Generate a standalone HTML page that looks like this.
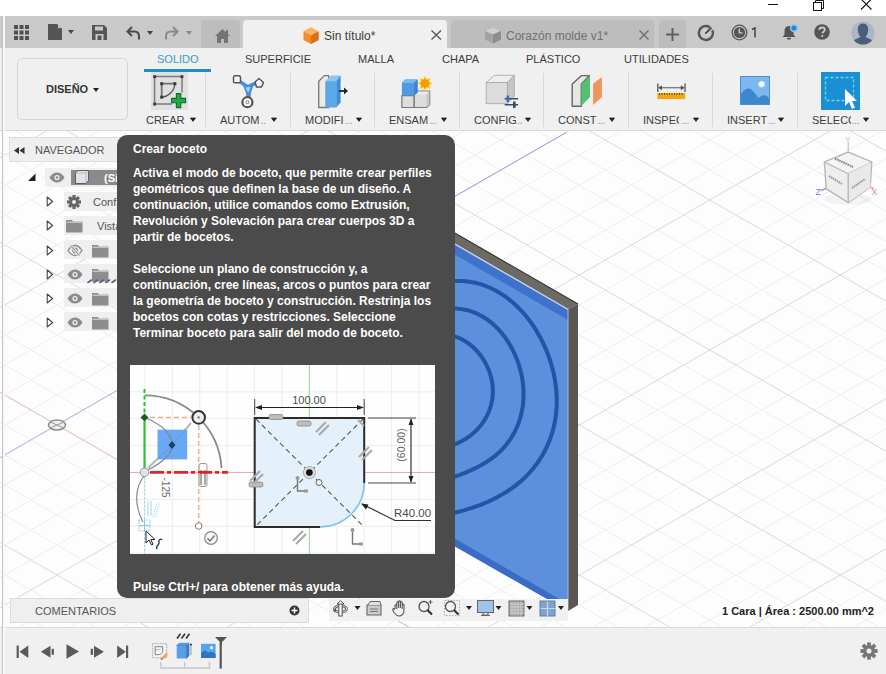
<!DOCTYPE html>
<html><head><meta charset="utf-8">
<style>
*{margin:0;padding:0;box-sizing:border-box}
html,body{width:886px;height:674px;overflow:hidden;background:#fff;font-family:"Liberation Sans",sans-serif}
.a{position:absolute}
#title{left:0;top:0;width:886px;height:16px;background:#fff}
#tb{left:0;top:16px;width:886px;height:32px;background:#c9c9c9}
#ribbon{left:0;top:48px;width:886px;height:83px;background:#f0f0f0;border-bottom:1px solid #d8d8d8}
#vp{left:0;top:131px;width:886px;height:496px;background:#fdfdfd;overflow:hidden}
#bottom{left:0;top:627px;width:886px;height:47px;background:#f0f0f0;border-top:1px solid #d9d9d9}
.tab{font-size:11px;color:#3c3c3c;top:54px;line-height:11px}
.lbl{font-size:11px;color:#3c3c3c;top:114px;line-height:12px;white-space:nowrap}
.lbl i{font-style:normal;color:#9a9a9a}
.arr{width:0;height:0;border-left:3px solid transparent;border-right:3px solid transparent;border-top:4px solid #222}
.sep{width:1px;background:#d8d8d8;top:73px;height:54px}
#tip{left:117px;top:135px;width:338px;height:462.5px;background:#4b4b4b;border-radius:10px}
.tt{color:#fff;font-weight:bold;font-size:12px;line-height:16px;white-space:nowrap}
</style></head><body>
<div class="a" id="title"></div>
<div class="a" id="tb"></div>
<div class="a" id="ribbon"></div>
<div class="a" id="vp"></div>
<div class="a" id="bottom"></div>
<svg class="a" style="left:0;top:131px" width="886" height="496"><path d="M0 -458.75L886 50.26M0 -428.75L886 80.26M0 -398.75L886 110.26M0 -368.75L886 140.26M0 -308.75L886 200.26M0 -278.75L886 230.26M0 -248.75L886 260.26M0 -218.75L886 290.26M0 -158.75L886 350.26M0 -128.75L886 380.26M0 -98.75L886 410.26M0 -68.75L886 440.26M0 -8.75L886 500.26M0 21.25L886 530.26M0 51.25L886 560.26M0 81.25L886 590.26M0 141.25L886 650.26M0 171.25L886 680.26M0 201.25L886 710.26M0 231.25L886 740.26M0 291.25L886 800.26M0 321.25L886 830.26M0 351.25L886 860.26M0 381.25L886 890.26M0 441.25L886 950.26M0 471.25L886 980.26M0 -3.25L886 -512.26M0 56.75L886 -452.26M0 86.75L886 -422.26M0 116.75L886 -392.26M0 146.75L886 -362.26M0 206.75L886 -302.26M0 236.75L886 -272.26M0 266.75L886 -242.26M0 296.75L886 -212.26M0 356.75L886 -152.26M0 386.75L886 -122.26M0 416.75L886 -92.26M0 446.75L886 -62.26M0 506.75L886 -2.26M0 536.75L886 27.74M0 566.75L886 57.74M0 596.75L886 87.74M0 656.75L886 147.74M0 686.75L886 177.74M0 716.75L886 207.74M0 746.75L886 237.74M0 806.75L886 297.74M0 836.75L886 327.74M0 866.75L886 357.74M0 896.75L886 387.74M0 956.75L886 447.74M0 986.75L886 477.74" stroke="#eeeeee" stroke-width="1" fill="none"/><path d="M0 -488.75L886 20.26M0 -338.75L886 170.26M0 -188.75L886 320.26M0 -38.75L886 470.26M0 111.25L886 620.26M0 261.25L886 770.26M0 411.25L886 920.26M0 26.75L886 -482.26M0 176.75L886 -332.26M0 326.75L886 -182.26M0 476.75L886 -32.26M0 626.75L886 117.74M0 776.75L886 267.74M0 926.75L886 417.74" stroke="#d9d9d9" stroke-width="1" fill="none"/></svg>
<!-- axes -->
<svg class="a" style="left:0;top:131px" width="886" height="496">
<path d="M0.0 261.3L120.0 330.2" stroke="#efc0c0" stroke-width="1" fill="none"/>
<path d="M380.0 479.6L420.0 502.5" stroke="#f2b4b4" stroke-width="1" fill="none"/>
<path d="M0.0 326.7L120.0 257.8" stroke="#b4b4e8" stroke-width="1" fill="none"/>
<path d="M455.0 65.3L566.0 1.6" stroke="#9d9de0" stroke-width="1" fill="none"/>
<ellipse cx="57" cy="294" rx="8.5" ry="5" fill="#f0f0f0" stroke="#8f8f8f" stroke-width="1.6"/>
<path d="M50 291L64 297M50 297L64 291" stroke="#9a9a9a" stroke-width="1"/>
</svg>
<!-- 3D panel -->
<svg class="a" style="left:0;top:0" width="886" height="674">
<defs><clipPath id="face"><path d="M440 236L568 309V611L440 538Z"/></clipPath></defs>
<path d="M440 224.5L578 304L568 309L440 235Z" fill="#6d6963"/>
<path d="M440 224.5L578 304" stroke="#3a3835" stroke-width="1.2" fill="none"/>
<path d="M568 309L578 304V605L568 611Z" fill="#5a5753"/>
<path d="M440 235L568 309V611L440 537Z" fill="#5c8fdc"/>
<g clip-path="url(#face)">
<path d="M440 236L568 310V320L440 246Z" fill="#3f72cc"/>
<path d="M440 530L568 604V625L440 550Z" fill="#3a6cc6"/>
<path d="M439.0 283.3L441.4 282.7L443.9 282.2L446.3 281.8L448.7 281.5L451.1 281.2L453.5 281.0L455.8 280.9L458.2 280.9L460.5 280.9L462.8 281.0L465.1 281.2L467.4 281.4L469.6 281.7L471.9 282.1L474.1 282.5L476.3 283.0L478.5 283.6L480.6 284.2L482.7 284.9L484.8 285.7L486.9 286.5L489.0 287.3L491.0 288.2L493.1 289.2L495.1 290.2L497.0 291.3L499.0 292.4L500.9 293.6L502.8 294.8L504.7 296.1L506.5 297.4L508.3 298.8L510.1 300.2L511.9 301.7L513.6 303.2L515.3 304.7L517.0 306.3L518.7 308.0L520.3 309.6L521.9 311.3L523.4 313.1L525.0 314.8L526.5 316.7L527.9 318.5L529.4 320.4L530.8 322.3L532.2 324.2L533.5 326.2L534.8 328.2L536.1 330.2L537.3 332.3L538.5 334.4L539.7 336.5L540.8 338.6L541.9 340.7L543.0 342.9L544.0 345.1L545.0 347.3L546.0 349.5L546.9 351.7L547.8 354.0L548.6 356.3L549.4 358.5L550.2 360.8L550.9 363.1L551.6 365.5L552.2 367.8L552.8 370.1L553.4 372.5L553.9 374.8L554.4 377.2L554.8 379.5L555.2 381.9L555.5 384.2L555.9 386.6L556.1 389.0L556.3 391.3L556.5 393.7L556.6 396.0L556.7 398.4L556.7 400.7L556.7 403.0L556.7 405.4L556.6 407.7L556.4 410.0L556.2 412.3L556.0 414.6L555.7 416.8L555.3 419.1L554.9 421.4L554.5 423.6L554.0 425.8L553.5 428.0L552.9 430.2L552.3 432.4L551.6 434.5L550.9 436.6L550.2 438.8L549.4 440.9L548.5 442.9L547.6 445.0L546.7 447.0L545.7 449.0L544.7 451.0L543.6 453.0L542.5 455.0L541.4 456.9L540.2 458.8L539.0 460.6L537.7 462.5L536.4 464.3L535.0 466.1L533.7 467.9L532.2 469.6L530.8 471.3L529.2 473.0L527.7 474.7L526.1 476.3L524.5 477.9L522.8 479.4L521.1 480.9L519.4 482.4L517.6 483.9L515.8 485.3L513.9 486.7L512.0 488.1L510.1 489.4L508.2 490.7L506.2 492.0L504.2 493.2L502.2 494.4L500.1 495.6L498.1 496.8L496.0 497.9L493.8 498.9L491.7 500.0L489.5 501.0L487.4 502.0L485.2 502.9L482.9 503.9L480.7 504.8L478.4 505.6L476.2 506.4L473.9 507.2L471.6 508.0L469.3 508.7L467.0 509.4L464.7 510.1L462.4 510.8L460.0 511.4L457.7 512.0L455.3 512.5L453.0 513.0L450.6 513.5L448.3 514.0L445.9 514.4L443.6 514.8L441.3 515.2L438.9 515.5" stroke="#2354a8" stroke-width="4" fill="none" stroke-linejoin="round"/>
<path d="M438.8 310.5L440.6 310.1L442.4 309.7L444.2 309.4L446.0 309.1L447.8 308.9L449.5 308.7L451.3 308.6L453.0 308.6L454.8 308.6L456.5 308.6L458.2 308.8L459.8 308.9L461.5 309.1L463.1 309.4L464.8 309.7L466.4 310.0L468.0 310.4L469.6 310.9L471.1 311.4L472.7 311.9L474.2 312.5L475.7 313.1L477.2 313.7L478.6 314.4L480.1 315.2L481.5 315.9L482.9 316.8L484.3 317.6L485.7 318.5L487.1 319.4L488.4 320.4L489.7 321.4L491.0 322.4L492.3 323.5L493.5 324.6L494.8 325.7L496.0 326.9L497.1 328.0L498.3 329.2L499.4 330.5L500.6 331.8L501.7 333.0L502.7 334.4L503.8 335.7L504.8 337.1L505.8 338.5L506.8 339.9L507.7 341.3L508.6 342.7L509.5 344.2L510.4 345.7L511.3 347.2L512.1 348.7L512.9 350.3L513.6 351.8L514.4 353.4L515.1 355.0L515.8 356.6L516.4 358.2L517.1 359.8L517.7 361.4L518.3 363.1L518.8 364.7L519.3 366.4L519.8 368.1L520.3 369.7L520.7 371.4L521.1 373.1L521.5 374.8L521.8 376.5L522.1 378.1L522.4 379.8L522.7 381.5L522.9 383.2L523.1 384.9L523.2 386.6L523.4 388.3L523.5 390.0L523.5 391.7L523.5 393.3L523.5 395.0L523.5 396.7L523.4 398.3L523.4 400.0L523.2 401.7L523.1 403.3L522.9 404.9L522.7 406.6L522.4 408.2L522.1 409.8L521.8 411.4L521.5 413.0L521.1 414.6L520.7 416.2L520.2 417.7L519.8 419.3L519.3 420.8L518.8 422.4L518.2 423.9L517.6 425.4L517.0 426.9L516.3 428.4L515.7 429.8L514.9 431.3L514.2 432.7L513.4 434.1L512.6 435.5L511.8 436.9L510.9 438.3L510.0 439.6L509.1 440.9L508.2 442.3L507.2 443.5L506.2 444.8L505.1 446.1L504.1 447.3L503.0 448.5L501.8 449.7L500.7 450.8L499.5 452.0L498.3 453.1L497.0 454.2L495.8 455.3L494.5 456.3L493.1 457.3L491.8 458.3L490.4 459.3L489.0 460.3L487.6 461.2L486.2 462.2L484.7 463.1L483.2 463.9L481.7 464.8L480.2 465.6L478.7 466.5L477.1 467.3L475.6 468.1L474.0 468.8L472.4 469.6L470.8 470.3L469.2 471.0L467.6 471.7L466.0 472.4L464.4 473.1L462.7 473.7L461.1 474.4L459.5 475.0L457.8 475.6L456.2 476.2L454.5 476.8L452.8 477.3L451.2 477.9L449.5 478.4L447.9 478.9L446.2 479.4L444.6 479.9L442.9 480.4L441.3 480.9L439.7 481.3" stroke="#2354a8" stroke-width="4" fill="none" stroke-linejoin="round"/>
<path d="M439.3 334.6L440.4 334.6L441.5 334.5L442.7 334.5L443.8 334.6L444.9 334.6L446.0 334.7L447.1 334.8L448.2 335.0L449.2 335.2L450.3 335.4L451.4 335.6L452.4 335.8L453.4 336.1L454.5 336.4L455.5 336.7L456.5 337.1L457.5 337.4L458.5 337.8L459.5 338.3L460.5 338.7L461.4 339.2L462.4 339.6L463.3 340.2L464.2 340.7L465.1 341.2L466.1 341.8L466.9 342.4L467.8 343.0L468.7 343.6L469.6 344.2L470.4 344.9L471.2 345.6L472.1 346.3L472.9 347.0L473.7 347.7L474.4 348.5L475.2 349.2L476.0 350.0L476.7 350.8L477.4 351.6L478.1 352.4L478.8 353.3L479.5 354.1L480.2 355.0L480.9 355.8L481.5 356.7L482.1 357.6L482.7 358.5L483.3 359.4L483.9 360.4L484.4 361.3L485.0 362.3L485.5 363.2L486.0 364.2L486.5 365.1L487.0 366.1L487.5 367.1L487.9 368.1L488.3 369.1L488.7 370.1L489.1 371.1L489.5 372.2L489.8 373.2L490.2 374.2L490.5 375.3L490.8 376.3L491.1 377.4L491.3 378.4L491.6 379.4L491.8 380.5L492.0 381.6L492.2 382.6L492.3 383.7L492.5 384.7L492.6 385.8L492.7 386.8L492.8 387.9L492.8 389.0L492.8 390.0L492.9 391.1L492.8 392.1L492.8 393.2L492.8 394.2L492.7 395.3L492.6 396.3L492.5 397.4L492.4 398.4L492.2 399.4L492.0 400.5L491.8 401.5L491.6 402.5L491.4 403.5L491.2 404.5L490.9 405.5L490.6 406.5L490.3 407.5L490.0 408.5L489.6 409.5L489.3 410.5L488.9 411.5L488.5 412.4L488.1 413.4L487.6 414.3L487.2 415.3L486.7 416.2L486.2 417.1L485.7 418.1L485.2 419.0L484.6 419.9L484.1 420.8L483.5 421.6L482.9 422.5L482.3 423.4L481.7 424.2L481.0 425.0L480.4 425.9L479.7 426.7L479.0 427.5L478.3 428.3L477.6 429.1L476.9 429.8L476.1 430.6L475.3 431.3L474.6 432.1L473.8 432.8L473.0 433.5L472.1 434.2L471.3 434.9L470.4 435.5L469.6 436.2L468.7 436.8L467.8 437.4L466.9 438.0L466.0 438.6L465.0 439.2L464.1 439.8L463.2 440.3L462.2 440.8L461.2 441.4L460.2 441.9L459.2 442.4L458.2 442.8L457.2 443.3L456.2 443.7L455.1 444.1L454.1 444.6L453.1 445.0L452.0 445.3L450.9 445.7L449.9 446.0L448.8 446.4L447.7 446.7L446.6 447.0L445.5 447.3L444.4 447.5L443.3 447.8L442.1 448.0L441.0 448.2L439.9 448.4" stroke="#2354a8" stroke-width="4" fill="none" stroke-linejoin="round"/>
</g>
<path d="M440 235.5L568 309.5" stroke="#c8d3e6" stroke-width="1.3" fill="none"/>
<path d="M568 309V611" stroke="#aab8d0" stroke-width="1" fill="none"/>
</svg>
<!-- navigator -->
<div class="a" style="left:9px;top:137px;width:300px;height:25px;background:#efefef;border:1px solid #dedede"></div>
<svg class="a" style="left:14px;top:147px" width="12" height="7"><path d="M0 3.5L5 0V7Z M5.5 3.5L10.5 0V7Z" fill="#333"/></svg>
<div class="a" style="left:35px;top:144px;font-size:11px;color:#555;line-height:12px">NAVEGADOR</div>
<svg class="a" style="left:27px;top:173px" width="9" height="9"><path d="M8.5 0.5V8H1Z" fill="#222"/></svg>
<div class="a" style="left:45px;top:168px;width:80px;height:19px;background:#efefef"></div>
<div class="a" style="left:71px;top:170px;width:60px;height:15px;background:#8a8a8a"></div>
<svg class="a" style="left:49px;top:172px" width="16" height="11"><path d="M0.5 5.5C3 1.5 5.5 0.5 8 0.5C10.5 0.5 13 1.5 15.5 5.5C13 9.5 10.5 10.5 8 10.5C5.5 10.5 3 9.5 0.5 5.5Z" fill="#8c8c8c"/><circle cx="8" cy="5.5" r="2.6" fill="#efefef"/><circle cx="8" cy="5.5" r="1.3" fill="#8c8c8c"/></svg>
<svg class="a" style="left:75px;top:170px" width="14" height="14"><path d="M3 0.5H13.5V10.5L11 13.5H0.5V3Z" fill="#dfe3ec" stroke="#555" stroke-width="0.9"/><path d="M0.5 3H11V13.5M11 3L13.5 0.5" fill="none" stroke="#9aa" stroke-width="0.6"/></svg>
<div class="a" style="left:104px;top:172px;font-size:11px;font-weight:bold;color:#fff;line-height:12px">(Si</div>
<svg class="a" style="left:46px;top:196px" width="8" height="11"><path d="M1.2 1L6.6 5.5L1.2 10Z" fill="none" stroke="#454545" stroke-width="1.1" stroke-linejoin="round"/></svg>
<div class="a" style="left:64px;top:192px;width:60px;height:19px;background:#efefef"></div>
<svg class="a" style="left:46px;top:220px" width="8" height="11"><path d="M1.2 1L6.6 5.5L1.2 10Z" fill="none" stroke="#454545" stroke-width="1.1" stroke-linejoin="round"/></svg>
<div class="a" style="left:64px;top:216px;width:60px;height:19px;background:#efefef"></div>
<svg class="a" style="left:46px;top:245px" width="8" height="11"><path d="M1.2 1L6.6 5.5L1.2 10Z" fill="none" stroke="#454545" stroke-width="1.1" stroke-linejoin="round"/></svg>
<div class="a" style="left:64px;top:240px;width:60px;height:19px;background:#efefef"></div>
<svg class="a" style="left:46px;top:269px" width="8" height="11"><path d="M1.2 1L6.6 5.5L1.2 10Z" fill="none" stroke="#454545" stroke-width="1.1" stroke-linejoin="round"/></svg>
<div class="a" style="left:64px;top:264px;width:60px;height:19px;background:#efefef"></div>
<svg class="a" style="left:46px;top:293px" width="8" height="11"><path d="M1.2 1L6.6 5.5L1.2 10Z" fill="none" stroke="#454545" stroke-width="1.1" stroke-linejoin="round"/></svg>
<div class="a" style="left:64px;top:288px;width:60px;height:19px;background:#efefef"></div>
<svg class="a" style="left:46px;top:317px" width="8" height="11"><path d="M1.2 1L6.6 5.5L1.2 10Z" fill="none" stroke="#454545" stroke-width="1.1" stroke-linejoin="round"/></svg>
<div class="a" style="left:64px;top:312px;width:60px;height:19px;background:#efefef"></div>
<svg class="a" style="left:67px;top:195px" width="14" height="14"><g transform="translate(7 7)" fill="#666"><circle r="4.8"/><rect x="-1.6" y="-7" width="3.2" height="3.5" transform="rotate(0)"/><rect x="-1.6" y="-7" width="3.2" height="3.5" transform="rotate(45)"/><rect x="-1.6" y="-7" width="3.2" height="3.5" transform="rotate(90)"/><rect x="-1.6" y="-7" width="3.2" height="3.5" transform="rotate(135)"/><rect x="-1.6" y="-7" width="3.2" height="3.5" transform="rotate(180)"/><rect x="-1.6" y="-7" width="3.2" height="3.5" transform="rotate(225)"/><rect x="-1.6" y="-7" width="3.2" height="3.5" transform="rotate(270)"/><rect x="-1.6" y="-7" width="3.2" height="3.5" transform="rotate(315)"/><circle r="2" fill="#efefef"/></g></svg>
<div class="a" style="left:93px;top:196px;font-size:11px;color:#555;line-height:12px">Conf</div>
<svg class="a" style="left:66px;top:219px" width="17" height="14"><path d="M0 1H6L7 2.5H16.5V13.5H0Z" fill="#8d8d8d"/><path d="M0.5 3.2H16.5" stroke="#efefef" stroke-width="0.8"/></svg>
<div class="a" style="left:97px;top:220px;font-size:11px;color:#555;line-height:12px">Vista</div>
<svg class="a" style="left:67px;top:244px" width="16" height="13"><path d="M1 6.5C3.5 2.5 5.5 1.5 8 1.5C10.5 1.5 12.5 2.5 15 6.5C12.5 10.5 10.5 11.5 8 11.5C5.5 11.5 3.5 10.5 1 6.5Z" fill="none" stroke="#8c8c8c" stroke-width="1.3"/><circle cx="8" cy="6.5" r="2.3" fill="none" stroke="#8c8c8c" stroke-width="1.2"/><path d="M3.5 1.5L12.5 11.5" stroke="#efefef" stroke-width="2.6"/><path d="M3.5 1.5L12.5 11.5" stroke="#8c8c8c" stroke-width="1.1"/></svg>
<svg class="a" style="left:92px;top:244px" width="17" height="14"><path d="M0 1H6L7 2.5H16.5V13.5H0Z" fill="#8d8d8d"/><path d="M0.5 3.2H16.5" stroke="#efefef" stroke-width="0.8"/></svg>
<svg class="a" style="left:67px;top:269px" width="16" height="11"><path d="M0.5 5.5C3 1.5 5.5 0.5 8 0.5C10.5 0.5 13 1.5 15.5 5.5C13 9.5 10.5 10.5 8 10.5C5.5 10.5 3 9.5 0.5 5.5Z" fill="#8c8c8c"/><circle cx="8" cy="5.5" r="2.6" fill="#efefef"/><circle cx="8" cy="5.5" r="1.3" fill="#8c8c8c"/></svg>
<svg class="a" style="left:92px;top:268px" width="17" height="14"><path d="M0 1H6L7 2.5H16.5V13.5H0Z" fill="#8d8d8d"/><path d="M0.5 3.2H16.5" stroke="#efefef" stroke-width="0.8"/></svg>
<svg class="a" style="left:67px;top:293px" width="16" height="11"><path d="M0.5 5.5C3 1.5 5.5 0.5 8 0.5C10.5 0.5 13 1.5 15.5 5.5C13 9.5 10.5 10.5 8 10.5C5.5 10.5 3 9.5 0.5 5.5Z" fill="#8c8c8c"/><circle cx="8" cy="5.5" r="2.6" fill="#efefef"/><circle cx="8" cy="5.5" r="1.3" fill="#8c8c8c"/></svg>
<svg class="a" style="left:92px;top:292px" width="17" height="14"><path d="M0 1H6L7 2.5H16.5V13.5H0Z" fill="#8d8d8d"/><path d="M0.5 3.2H16.5" stroke="#efefef" stroke-width="0.8"/></svg>
<svg class="a" style="left:67px;top:317px" width="16" height="11"><path d="M0.5 5.5C3 1.5 5.5 0.5 8 0.5C10.5 0.5 13 1.5 15.5 5.5C13 9.5 10.5 10.5 8 10.5C5.5 10.5 3 9.5 0.5 5.5Z" fill="#8c8c8c"/><circle cx="8" cy="5.5" r="2.6" fill="#efefef"/><circle cx="8" cy="5.5" r="1.3" fill="#8c8c8c"/></svg>
<svg class="a" style="left:92px;top:316px" width="17" height="14"><path d="M0 1H6L7 2.5H16.5V13.5H0Z" fill="#8d8d8d"/><path d="M0.5 3.2H16.5" stroke="#efefef" stroke-width="0.8"/></svg>
<svg class="a" style="left:87px;top:277px" width="30" height="7"><path d="M1 5.5L4.5 3M7 5.5L10.5 3M13 5.5L16.5 3M19 5.5L22.5 3M25 5.5L28.5 3" stroke="#5a6282" stroke-width="1.6" stroke-linecap="round"/></svg>

<!-- view cube -->
<svg class="a" style="left:812px;top:133px" width="74" height="78" font-family="Liberation Sans">
<ellipse cx="36" cy="66" rx="24" ry="6" fill="#000" opacity="0.04"/>
<path d="M36.3 19.2L59.8 29L58.3 54L36.3 69.6L14.3 55.9L12.3 29Z" fill="#eeeeee" stroke="#b4b4b4" stroke-width="1.3" stroke-linejoin="round"/>
<path d="M36.3 19.2L59.8 29L36.3 40.8L12.3 29Z" fill="#f4f4f4" stroke="#b4b4b4" stroke-width="1.2" stroke-linejoin="round"/>
<path d="M36.3 40.8V69.6" stroke="#b8b8b8" stroke-width="1.2"/>
<path d="M36.3 40.8L58.3 29.5V54L36.3 69.6Z" fill="#e9e9e9"/>
<path d="M36.3 40.8V69.6" stroke="#b8b8b8" stroke-width="1.2"/>
<path d="M23 25.5L41 34" stroke="#8a8a8a" stroke-width="2.2" stroke-dasharray="1.6 0.7"/>
<path d="M17 43L30 51" stroke="#9a9a9a" stroke-width="2" stroke-dasharray="1.6 0.7"/>
<path d="M40 55L53 46" stroke="#9a9a9a" stroke-width="2" stroke-dasharray="1.6 0.7"/>
<path d="M36.3 18.5V9" stroke="#b5e0b5" stroke-width="1.6"/><text x="33.3" y="8.5" font-size="8" fill="#9fd49f">Y</text>
<path d="M14 55.5L9 57.5" stroke="#9a9ad8" stroke-width="1.6"/>
<text x="3.5" y="62" font-size="9" fill="#8080d0">Z</text>
<path d="M58.5 54L62 56" stroke="#eaa" stroke-width="1.6"/>
<text x="59.5" y="62" font-size="9" fill="#e59090">X</text>
</svg>
<!-- comments bar -->
<div class="a" style="left:10px;top:598px;width:299px;height:25px;background:#efefef;border:1px solid #dcdcdc"></div>
<div class="a" style="left:35px;top:605px;font-size:11px;color:#555;line-height:12px">COMENTARIOS</div>
<svg class="a" style="left:289px;top:605px" width="11" height="11"><circle cx="5.5" cy="5.5" r="5" fill="#333"/><path d="M5.5 2.5V8.5M2.5 5.5H8.5" stroke="#fff" stroke-width="1.5"/></svg>
<!-- status -->
<div class="a" style="left:722px;top:605px;font-size:11px;font-weight:bold;color:#222;line-height:12px">1 Cara | Área : 2500.00 mm^2</div>



<!-- title bar controls -->
<div class="a" style="left:768px;top:4px;width:10px;height:1px;background:#111"></div>
<svg class="a" style="left:812px;top:0" width="14" height="11"><rect x="1.5" y="2.5" width="8" height="8" fill="none" stroke="#111" stroke-width="1"/><path d="M3.5 2.5V0.5h8v8h-2" fill="none" stroke="#111" stroke-width="1"/></svg>
<svg class="a" style="left:860px;top:0" width="13" height="11"><path d="M1 -1L11.5 9.5M11.5 -1L1 9.5" stroke="#111" stroke-width="1.1"/></svg>
<!-- left edge -->
<div class="a" style="left:2px;top:16px;width:1px;height:658px;background:#c4c4c4"></div>
<div class="a" style="left:3px;top:16px;width:1.5px;height:658px;background:#f8f8f8"></div>
<!-- toolbar icons -->
<svg class="a" style="left:14px;top:25px" width="16" height="15" fill="#505050"><rect x="0" y="0" width="4" height="4"/><rect x="5.5" y="0" width="4" height="4"/><rect x="11" y="0" width="4" height="4"/><rect x="0" y="5.5" width="4" height="4"/><rect x="5.5" y="5.5" width="4" height="4"/><rect x="11" y="5.5" width="4" height="4"/><rect x="0" y="11" width="4" height="4"/><rect x="5.5" y="11" width="4" height="4"/><rect x="11" y="11" width="4" height="4"/></svg>
<svg class="a" style="left:48px;top:24px" width="28" height="17"><path d="M0 0H9L14 5V16H0Z" fill="#555"/><path d="M9 0V5H14" fill="#c9c9c9" stroke="none"/><path d="M9.5 0.5V4.5H13.5" fill="none" stroke="#555" stroke-width="1"/><path d="M20 6H26L23 10Z" fill="#444"/></svg>
<svg class="a" style="left:92px;top:25px" width="16" height="15"><path d="M0 0H12L15 3V15H0Z" fill="#555"/><rect x="3" y="1.5" width="8" height="4" fill="#c9c9c9"/><rect x="3.5" y="9" width="8" height="6" fill="#c9c9c9"/><rect x="5.5" y="10.5" width="4" height="4.5" fill="#555"/></svg>
<svg class="a" style="left:126px;top:25px" width="30" height="16"><path d="M1.5 6.5H8.5C11.5 6.5 13 8.5 13 11.5V14.5" fill="none" stroke="#4a4a4a" stroke-width="2"/><path d="M6 2L1.5 6.5L6 11" fill="none" stroke="#4a4a4a" stroke-width="2"/><path d="M21 6H27L24 10Z" fill="#444"/></svg>
<svg class="a" style="left:164px;top:25px" width="30" height="16"><path d="M13.5 6.5H6.5C3.5 6.5 2 8.5 2 11.5V14.5" fill="none" stroke="#8a8a8a" stroke-width="2"/><path d="M9 2L13.5 6.5L9 11" fill="none" stroke="#8a8a8a" stroke-width="2"/><path d="M22 6H28L25 10Z" fill="#8a8a8a"/></svg>
<!-- tabs -->
<div class="a" style="left:201px;top:20px;width:39px;height:28px;background:#bdbdbd;border-radius:4px 4px 0 0"></div>
<svg class="a" style="left:215px;top:29px" width="15" height="14"><path d="M7.5 0L15 7H13V14H9V10H6V14H2V7H0Z" fill="#747474"/><rect x="11" y="1" width="2" height="4" fill="#747474"/></svg>
<div class="a" style="left:243px;top:20px;width:204px;height:29px;background:#f0f0f0;border-radius:4px 4px 0 0"></div>
<svg class="a" style="left:303px;top:27px" width="16" height="18"><path d="M8 0.5L15.5 4.5V13L8 17L0.5 13V4.5Z" fill="#f08c2a"/><path d="M0.5 4.5L8 8.5L15.5 4.5L8 0.5Z" fill="#ffb060"/><path d="M8 8.5V17L15.5 13V4.5Z" fill="#d8701a"/></svg>
<div class="a" style="left:324px;top:28.5px;font-size:12px;color:#3a3a3a;line-height:14px">Sin título*</div>
<svg class="a" style="left:431px;top:30px" width="11" height="10"><path d="M0.5 0.5L10 9.5M10 0.5L0.5 9.5" stroke="#555" stroke-width="1.3"/></svg>
<div class="a" style="left:451px;top:20px;width:203px;height:28px;background:#bdbdbd;border-radius:4px 4px 0 0"></div>
<svg class="a" style="left:484px;top:27px" width="18" height="17"><path d="M9 0.5L17 4V12.5L9 16.5L1 12.5V4Z" fill="#a3a3a3"/><path d="M1 4L9 7.5L17 4L9 0.5Z" fill="#cfcfcf"/><path d="M9 7.5V16.5L17 12.5V4Z" fill="#8d8d8d"/></svg>
<div class="a" style="left:506px;top:28.5px;font-size:12px;color:#707070;line-height:14px">Corazón molde v1*</div>
<svg class="a" style="left:639px;top:30px" width="10" height="10"><path d="M0.5 0.5L9.5 9.5M9.5 0.5L0.5 9.5" stroke="#6a6a6a" stroke-width="1.2"/></svg>
<div class="a" style="left:659px;top:20px;width:27px;height:28px;background:#bdbdbd;border-radius:4px 4px 0 0"></div>
<svg class="a" style="left:666px;top:28px" width="14" height="14"><path d="M6.5 0V13M0 6.5H13" stroke="#606060" stroke-width="2"/></svg>
<!-- right icons -->
<svg class="a" style="left:697px;top:23px" width="19" height="19"><path d="M12.8 4.2A7 7 0 1 0 15.3 7.2" fill="none" stroke="#555" stroke-width="2.4"/><path d="M5.5 9.5L9 6L13 10L9.5 13.5Z" fill="#d8d8d8"/><path d="M8.2 10.8L14.5 4.5" stroke="#555" stroke-width="2.2"/></svg>
<svg class="a" style="left:731px;top:24px" width="17" height="17"><circle cx="8.5" cy="8.5" r="7.3" fill="none" stroke="#555" stroke-width="1.3"/><circle cx="8.5" cy="8.5" r="5.6" fill="#555"/><path d="M8.3 4.8V8.9H11.6" fill="none" stroke="#d0d0d0" stroke-width="1.3"/></svg>
<svg class="a" style="left:751px;top:27px" width="6" height="11"><path d="M1 2.6L4 0.8V10.5" fill="none" stroke="#333" stroke-width="1.3"/></svg>
<svg class="a" style="left:781px;top:22px" width="18" height="19"><path d="M8 4C4.5 4 3.5 7 3.5 9.5V12.5L1.5 15H14.5L12.5 12.5V9.5C12.5 7 11.5 4 8 4Z" fill="#555"/><rect x="6" y="15.8" width="4" height="1.8" rx="0.8" fill="#555"/><circle cx="13" cy="6" r="4" fill="#9fc6e6"/><circle cx="13" cy="6" r="2.6" fill="#1f8ad8"/></svg>
<svg class="a" style="left:814px;top:24px" width="16" height="16"><circle cx="8" cy="8" r="7.8" fill="#555"/><path d="M5.3 6C5.3 4.3 6.5 3.5 8 3.5C9.6 3.5 10.8 4.4 10.8 5.8C10.8 7.5 8.5 7.8 8.5 9.5" fill="none" stroke="#c9c9c9" stroke-width="1.8"/><circle cx="8.3" cy="12" r="1.1" fill="#c9c9c9"/></svg>
<svg class="a" style="left:851px;top:21px" width="24" height="24"><defs><clipPath id="cav"><circle cx="12" cy="12" r="11.6"/></clipPath></defs><circle cx="12" cy="12" r="11.6" fill="#a8b7cb"/><g clip-path="url(#cav)" fill="#4a5e7a"><path d="M12 2.5C15.5 2.5 17.2 5 17.2 8.5C17.2 12 15.5 15 14.5 16L20 18.5C22 19.5 22.5 22 22.5 24H1.5C1.5 22 2 19.5 4 18.5L9.5 16C8.5 15 6.8 12 6.8 8.5C6.8 5 8.5 2.5 12 2.5Z"/></g></svg>


<!-- ribbon -->
<div class="a" style="left:17px;top:58px;width:111px;height:62px;border:1px solid #d6d6d6;border-radius:5px;background:#f0f0f0"></div>
<div class="a" style="left:46px;top:83px;font-size:11px;font-weight:bold;color:#333;line-height:12px">DISEÑO</div>
<div class="a arr" style="left:93px;top:88px"></div>
<div class="a tab" style="left:157px;color:#3a9ac9">SOLIDO</div>
<div class="a tab" style="left:245px">SUPERFICIE</div>
<div class="a tab" style="left:358px">MALLA</div>
<div class="a tab" style="left:442px">CHAPA</div>
<div class="a tab" style="left:526px">PLÁSTICO</div>
<div class="a tab" style="left:624px">UTILIDADES</div>
<div class="a" style="left:144px;top:69px;width:67px;height:3px;background:#1e8ec8"></div>
<div class="a sep" style="left:205px"></div>
<div class="a sep" style="left:290px"></div>
<div class="a sep" style="left:374px"></div>
<div class="a sep" style="left:459px"></div>
<div class="a sep" style="left:543px"></div>
<div class="a sep" style="left:628px"></div>
<div class="a sep" style="left:712px"></div>
<div class="a sep" style="left:797px"></div>
<div class="a lbl" style="left:146px">CREAR</div><svg class="a" style="left:189.5px;top:117px" width="7" height="6"><path d="M0.5 1H5.5L3 4.4Z" fill="#222" stroke="#222" stroke-width="0.8" stroke-linejoin="round"/></svg>
<div class="a lbl" style="left:220px">AUTOM<i style="letter-spacing:-0.6px;margin-left:1px">..</i></div><svg class="a" style="left:271.0px;top:117px" width="7" height="6"><path d="M0.5 1H5.5L3 4.4Z" fill="#222" stroke="#222" stroke-width="0.8" stroke-linejoin="round"/></svg>
<div class="a lbl" style="left:305px">MODIFI<i style="letter-spacing:-0.6px;margin-left:1px">...</i></div><svg class="a" style="left:355.5px;top:117px" width="7" height="6"><path d="M0.5 1H5.5L3 4.4Z" fill="#222" stroke="#222" stroke-width="0.8" stroke-linejoin="round"/></svg>
<div class="a lbl" style="left:389px">ENSAM<i style="letter-spacing:-0.6px;margin-left:1px">...</i></div><svg class="a" style="left:441.0px;top:117px" width="7" height="6"><path d="M0.5 1H5.5L3 4.4Z" fill="#222" stroke="#222" stroke-width="0.8" stroke-linejoin="round"/></svg>
<div class="a lbl" style="left:474px;width:42.0px;overflow:hidden">CONFIGURAR</div><div class="a lbl" style="left:514.5px;color:#999;letter-spacing:-0.6px">...</div><svg class="a" style="left:524.5px;top:117px" width="7" height="6"><path d="M0.5 1H5.5L3 4.4Z" fill="#222" stroke="#222" stroke-width="0.8" stroke-linejoin="round"/></svg>
<div class="a lbl" style="left:558px">CONST<i style="letter-spacing:-0.6px;margin-left:1px">...</i></div><svg class="a" style="left:609.0px;top:117px" width="7" height="6"><path d="M0.5 1H5.5L3 4.4Z" fill="#222" stroke="#222" stroke-width="0.8" stroke-linejoin="round"/></svg>
<div class="a lbl" style="left:643px;width:36.0px;overflow:hidden">INSPECCIONAR</div><div class="a lbl" style="left:681.5px;color:#999;letter-spacing:-0.6px">...</div><svg class="a" style="left:693.0px;top:117px" width="7" height="6"><path d="M0.5 1H5.5L3 4.4Z" fill="#222" stroke="#222" stroke-width="0.8" stroke-linejoin="round"/></svg>
<div class="a lbl" style="left:727px">INSERT<i style="letter-spacing:-0.6px;margin-left:1px">...</i></div><svg class="a" style="left:778.0px;top:117px" width="7" height="6"><path d="M0.5 1H5.5L3 4.4Z" fill="#222" stroke="#222" stroke-width="0.8" stroke-linejoin="round"/></svg>
<div class="a lbl" style="left:812px;width:39.0px;overflow:hidden">SELECCIONAR</div><div class="a lbl" style="left:851.5px;color:#999;letter-spacing:-0.6px">...</div><svg class="a" style="left:862.5px;top:117px" width="7" height="6"><path d="M0.5 1H5.5L3 4.4Z" fill="#222" stroke="#222" stroke-width="0.8" stroke-linejoin="round"/></svg>
<!-- crear icon -->
<div class="a" style="left:151px;top:72px;width:37px;height:38px;background:#e0e0e0"></div>
<svg class="a" style="left:148px;top:70px" width="44" height="42">
<path d="M6.6 6.6H34M6.6 6.6V34H24M34 6.6V22.5" fill="none" stroke="#7a7a7a" stroke-width="1.5"/>
<rect x="5.2" y="5.2" width="2.9" height="2.9" fill="#3a3a3a"/><rect x="32.5" y="5.2" width="2.9" height="2.9" fill="#3a3a3a"/><rect x="5.2" y="32.6" width="2.9" height="2.9" fill="#3a3a3a"/>
<path d="M13.7 13.7H26.9M13.7 13.7V27.2" stroke="#707070" stroke-width="1.8" fill="none"/><path d="M13.7 27.2C20 27 26.5 21 26.9 13.7" stroke="#555" stroke-width="1.4" fill="none"/>
<rect x="12.2" y="12.2" width="3" height="3" fill="#3a3a3a"/><rect x="25.4" y="12.2" width="3" height="3" fill="#3a3a3a"/><rect x="12.2" y="25.7" width="3" height="3" fill="#3a3a3a"/>
<path d="M28.4 23.6H32.8V28.4H37.6V32.8H32.8V37.6H28.4V32.8H23.6V28.4H28.4Z" fill="#22a845" stroke="#0f6b2a" stroke-width="1.1" stroke-linejoin="round"/>
</svg>
<!-- autom icon -->
<svg class="a" style="left:228px;top:70px" width="44" height="42">
<path d="M10 10.5C14 13 17 15 20 17C23 15 26 13.5 30 12.5" fill="none" stroke="#4a8fd6" stroke-width="3.6" stroke-linecap="round"/>
<path d="M14 13L20 16.5L26 14L21.5 27L19.5 27Z" fill="#4a8fd6"/>
<path d="M17.5 17.5L22.5 17L20.3 23Z" fill="#a9d6f5"/>
<path d="M19.5 22V28M21.5 22V28" stroke="#4a8fd6" stroke-width="2.4"/>
<rect x="5.5" y="5.8" width="7" height="7" rx="1.6" fill="#f4f4f4" stroke="#555" stroke-width="1.5"/>
<path d="M31 8.5L35.5 12.5L33.5 17L28.5 17L27 12Z" fill="#f4f4f4" stroke="#555" stroke-width="1.5" stroke-linejoin="round"/>
<circle cx="19.4" cy="32.2" r="5" fill="#fff" stroke="#555" stroke-width="2.2"/>
<circle cx="19.4" cy="32.2" r="1.6" fill="none" stroke="#8a7a60" stroke-width="1"/>
</svg>
<!-- modifi icon -->
<svg class="a" style="left:310px;top:70px" width="40" height="40">
<path d="M8.7 37.5V11.2L14.4 5.6H18.7V37.5Z" fill="#efeae4" stroke="#777" stroke-width="1.3" stroke-linejoin="round"/>
<path d="M15.3 11.2L21 5.6H30.6L26.2 11.2Z" fill="#8cc4f4"/>
<path d="M26.2 11.2L30.6 5.6V32.5L26.2 37.5Z" fill="#3f8fd8"/>
<rect x="15.3" y="11.2" width="10.9" height="26.3" fill="#5aa7ea"/>
<path d="M29 21H35" stroke="#222" stroke-width="1.8"/><path d="M34 17.5L38 21L34 24.5Z" fill="#222"/>
</svg>
<!-- ensam icon -->
<svg class="a" style="left:396px;top:70px" width="44" height="42">
<path d="M5.9 25.6H18.2V37.5H5.9Z" fill="#dedede" stroke="#777" stroke-width="1.2"/>
<path d="M18.2 25.6V21.2H33.7V34.5L30.5 37.5H18.2Z" fill="#dcdcdc" stroke="#777" stroke-width="1.2" stroke-linejoin="round"/>
<path d="M18.2 24.5L21 21.6H33.5L30.5 24.5Z" fill="#ececec"/>
<path d="M30.5 24.5L33.5 21.6V34.5L30.5 37.5Z" fill="#c6c6c6"/>
<path d="M5.9 13L9 9.4H21.6V22.5L18.2 25.6H5.9Z" fill="#4f9ae0"/>
<path d="M5.9 13L9 9.4H21.6L18.2 13Z" fill="#79b8ee"/>
<path d="M18.2 13L21.6 9.4V22.5L18.2 25.6Z" fill="#3d86cf"/>
<path d="M29.0 6.2L30.6 9.4L34.1 8.3L33.0 11.8L36.2 13.4L33.0 15.0L34.1 18.5L30.6 17.4L29.0 20.6L27.4 17.4L23.9 18.5L25.0 15.0L21.8 13.4L25.0 11.8L23.9 8.3L27.4 9.4Z" fill="#f7a800" stroke="#ffd860" stroke-width="0.8"/>
<circle cx="29" cy="13.4" r="3.8" fill="#f59a00"/>
</svg>
<!-- confic icon -->
<svg class="a" style="left:480px;top:70px" width="40" height="40">
<path d="M6.2 12.5L14.4 5.3H34.3L27.4 12.5Z" fill="#efefef" stroke="#aaa" stroke-width="0.9"/>
<path d="M27.4 12.5L34.3 5.3V26.2L27.4 33.7Z" fill="#c6c6c6" stroke="#aaa" stroke-width="0.9"/>
<rect x="6.2" y="12.5" width="21.2" height="21.2" fill="#dcdcdc" stroke="#aaa" stroke-width="0.9"/>
<rect x="23.5" y="26" width="15" height="12" fill="#f0f0f0" opacity="0.0"/>
<path d="M24.7 28.7H38.1M24.7 34.7H38.1" stroke="#3a4a60" stroke-width="1.5"/>
<rect x="26.5" y="25.5" width="2.6" height="6.4" fill="#2f77b8"/><rect x="33" y="31.5" width="2.6" height="6.4" fill="#3a4a60"/>
</svg>
<!-- const icon -->
<svg class="a" style="left:565px;top:70px" width="44" height="42">
<path d="M7.2 36.2V14L16.6 5.6H24.4L16.3 14.2V36.2Z" fill="#e6e6e6" stroke="#666" stroke-width="1.4" stroke-linejoin="round"/>
<path d="M16.3 14.4L25 5.6V27L16.3 36Z" fill="#52c272"/>
<path d="M28.1 13.75L36.9 6.9V26.9L28.1 35Z" fill="#f0955a"/>
</svg>
<!-- inspec icon -->
<svg class="a" style="left:650px;top:76px" width="44" height="30">
<path d="M7.8 7.4V15.9M35 7.4V15.9" stroke="#666" stroke-width="1.5"/><path d="M9 11.7H34" stroke="#777" stroke-width="1.3"/><path d="M8.3 11.7L12 9.2V14.2Z M34.5 11.7L30.8 9.2V14.2Z" fill="#555"/>
<rect x="7.4" y="17.1" width="27.8" height="6" fill="#f5a70f"/><path d="M9.5 17.1V19M12 17.1V19M14.5 17.1V19M17 17.1V19M19.5 17.1V19M22 17.1V19M24.5 17.1V19M27 17.1V19M29.5 17.1V19M32 17.1V19" stroke="#6a4800" stroke-width="1"/>
</svg>
<!-- insert icon -->
<svg class="a" style="left:740px;top:76px" width="30" height="29">
<rect x="0.5" y="0.5" width="29" height="28" fill="#7ab8ef" stroke="#4a8fd2" stroke-width="1"/>
<circle cx="21.6" cy="8.2" r="3" fill="#f4f8ff" stroke="#cfe4f8" stroke-width="0.6"/>
<path d="M1 28V18C4 14 6.5 12.6 8.9 12.6C12 12.6 15 18 18.6 22C20.5 20 22.5 19.3 24.5 19.3C26.5 19.3 28 21 29 23V28Z" fill="#3c87cd"/>
</svg>
<!-- selecc icon -->
<svg class="a" style="left:821px;top:72px" width="39" height="38">
<rect x="0" y="0" width="39" height="38" fill="#1b8fd6"/>
<rect x="4.5" y="5.5" width="28" height="23" fill="none" stroke="#6cd6d6" stroke-width="1.3" stroke-dasharray="3 2"/>
<path d="M24 17V34L28 30L31 37L34 35.5L31 29H36Z" fill="#fff"/>
</svg>


<!-- view toolbar -->
<div class="a" style="left:329px;top:599px;width:239px;height:22px;background:#f1f1f1"></div>
<svg class="a" style="left:333px;top:600px" width="240" height="17">
<path d="M1.5 9C1.5 7 4.5 5.6 7.5 5.6C10.5 5.6 13.5 7 13.5 9C13.5 11 10.5 12.4 7.5 12.4C4.5 12.4 1.5 11 1.5 9Z" fill="none" stroke="#555" stroke-width="2.6"/><path d="M1.5 9C1.5 7 4.5 5.6 7.5 5.6C10.5 5.6 13.5 7 13.5 9C13.5 11 10.5 12.4 7.5 12.4C4.5 12.4 1.5 11 1.5 9Z" fill="none" stroke="#fff" stroke-width="1"/>
<path d="M5.8 3.5H9.2V16H5.8Z" fill="#fff" stroke="#555" stroke-width="1.1"/><path d="M4 4L7.5 0.8L11 4Z" fill="#fff" stroke="#555" stroke-width="1"/><path d="M0.5 8.3L3.5 10.5L0.8 12" fill="#555"/>
<path d="M21.5 6H27.5L24.5 10Z" fill="#222"/>
<g transform="translate(33 0)"><path d="M1 5H15V15H1Z" fill="#c8cbd0" stroke="#666" stroke-width="1.1"/><path d="M2 5L4 1.5H14L15 5" fill="#e0e0e0" stroke="#666" stroke-width="1"/><path d="M4 9H12M4 11.5H12" stroke="#777" stroke-width="1"/></g>
<g transform="translate(59 0)" fill="none" stroke="#555" stroke-width="1.1"><path d="M3 9V5.5C3 4.5 4.8 4.5 4.8 5.5V9M4.8 8V2.5C4.8 1.5 6.6 1.5 6.6 2.5V8M6.6 8V1.5C6.6 0.5 8.4 0.5 8.4 1.5V8M8.4 8V2.5C8.4 1.5 10.2 1.5 10.2 2.5V9M10.2 9V5C10.2 4 12 4 12 5V10C12 13.5 10 16 7 16C4.5 16 3.5 14.5 2 12.5L0.8 10C0.3 9 1.8 8.2 2.5 9L3 9.5"/></g>
<g transform="translate(85 0)"><circle cx="6" cy="6.5" r="5" fill="#eef3f8" stroke="#555" stroke-width="1.3"/><path d="M9.5 10L14 14.5" stroke="#333" stroke-width="2.2"/><path d="M12.5 0V4M10.5 2H14.5" stroke="#555" stroke-width="0.9"/></g>
<g transform="translate(111 0)"><path d="M0.5 0.5H15.5V15.5H0.5Z" fill="none" stroke="#999" stroke-width="0.8" stroke-dasharray="1.5 1.5"/><circle cx="6.5" cy="6.5" r="5" fill="#eef3f8" stroke="#555" stroke-width="1.3"/><path d="M10 10L14.5 14.5" stroke="#333" stroke-width="2.2"/></g>
<path d="M133 6H139L136 10Z" fill="#222"/>
<g transform="translate(144 0)"><rect x="0.5" y="0.5" width="16" height="12" fill="#9fc3ea" stroke="#666" stroke-width="1"/><path d="M6 13V15H11V13M4 15.5H13" stroke="#666" stroke-width="1.2" fill="none"/></g>
<path d="M162.5 6H168.5L165.5 10Z" fill="#222"/>
<g transform="translate(175.5 0.5)"><rect x="0.5" y="0.5" width="15" height="15" fill="#a8a8a8" stroke="#666" stroke-width="1"/><path d="M3.5 1V16M6.5 1V16M9.5 1V16M12.5 1V16M1 3.5H16M1 6.5H16M1 9.5H16M1 12.5H16" stroke="#d8d8d8" stroke-width="0.7"/></g>
<path d="M193.5 6H199.5L196.5 10Z" fill="#222"/>
<g transform="translate(206.5 0.5)"><rect x="0.5" y="0.5" width="15" height="15" fill="#7fa3cf" stroke="#5f7fa8" stroke-width="1"/><path d="M8 1V16M1 8H16" stroke="#c8d6e8" stroke-width="1.2"/></g>
<path d="M225 6H231L228 10Z" fill="#222"/>
</svg>
<!-- timeline -->
<svg class="a" style="left:0;top:636px" width="140" height="30"><g fill="#5a5a5a">
<rect x="16.6" y="9.5" width="2.2" height="12.5"/><path d="M28.3 9.5V22L19.5 15.75Z"/>
<path d="M40.8 15.75L50.5 9.8V21.7Z"/><rect x="51.6" y="12.8" width="2.3" height="6"/>
<path d="M66.5 8.2V22.7L79 15.45Z"/>
<rect x="90.7" y="12.8" width="2.3" height="6"/><path d="M94 9.8V21.7L103.9 15.75Z"/>
<path d="M117.1 9.5V22L125.9 15.75Z"/><rect x="126" y="9.5" width="2.2" height="12.5"/>
</g></svg>
<svg class="a" style="left:140px;top:628px" width="100" height="46">
<g transform="translate(12.2 15.2)"><rect x="0.5" y="0.5" width="14" height="14" fill="#f2f4f6" stroke="#999" stroke-width="0.9" stroke-dasharray="1.4 1"/><path d="M3 3.5H10.5V8C10.5 10 9 11.5 6 11.5H3Z" fill="none" stroke="#777" stroke-width="0.9"/><path d="M3 6.5H8" stroke="#999" stroke-width="0.7"/><path d="M9 14.5L14 9.5L15.8 11.3L10.8 16.3Z" fill="#f2a04a"/><path d="M9 14.5L8.3 16.8L10.8 16.3Z" fill="#a0684a"/></g>
<path d="M37 10.5L40.5 5.8M41.5 10.5L45 5.8M46 10.5L49.5 5.8" stroke="#333" stroke-width="1.6"/>
<g transform="translate(36.7 14.7)"><path d="M0 2.5L2.5 0H12.5V13L10 15.8H0Z" fill="#5a9fe6"/><path d="M0 2.5H10V15.8" fill="none" stroke="#3f7fc0" stroke-width="0.7"/><path d="M10 2.5L12.5 0V13L10 15.8Z" fill="#3b7ccc"/><path d="M14.2 1.5V12.5" stroke="#888" stroke-width="0.9"/><circle cx="14.2" cy="1.8" r="1" fill="#333"/></g>
<g transform="translate(61 15.8)"><rect x="0" y="0" width="14.6" height="14.1" fill="#58a4ea"/><circle cx="10.5" cy="4" r="1.7" fill="#e8f4ff"/><path d="M0 14.1V9.5C2.5 6.5 4.5 6 7 9C9 7.5 11.5 7.5 14.6 10.5V14.1Z" fill="#2f74bf"/></g>
<path d="M20.9 34V40H69.4V34M44.6 34V40" fill="none" stroke="#c6c6c6" stroke-width="1.4"/>
<path d="M75 9H87L82 14V17H80V14Z" fill="#555"/><rect x="79.6" y="14" width="2.2" height="26.6" fill="#555"/>
</svg>
<svg class="a" style="left:860px;top:642px" width="18" height="18"><g transform="translate(9 9)" fill="#777"><circle r="6"/><g><rect x="-1.9" y="-8.6" width="3.8" height="4" transform="rotate(0)"/><rect x="-1.9" y="-8.6" width="3.8" height="4" transform="rotate(45)"/><rect x="-1.9" y="-8.6" width="3.8" height="4" transform="rotate(90)"/><rect x="-1.9" y="-8.6" width="3.8" height="4" transform="rotate(135)"/><rect x="-1.9" y="-8.6" width="3.8" height="4" transform="rotate(180)"/><rect x="-1.9" y="-8.6" width="3.8" height="4" transform="rotate(225)"/><rect x="-1.9" y="-8.6" width="3.8" height="4" transform="rotate(270)"/><rect x="-1.9" y="-8.6" width="3.8" height="4" transform="rotate(315)"/></g><circle r="2.5" fill="#f0f0f0"/></g></svg>

<!-- tooltip -->
<div class="a" id="tip"></div>
<div class="a tt" style="left:133px;top:141px">Crear boceto</div>
<div class="a tt" style="left:133px;top:165px">Activa el modo de boceto, que permite crear perfiles<br>geométricos que definen la base de un diseño. A<br>continuación, utilice comandos como Extrusión,<br>Revolución y Solevación para crear cuerpos 3D a<br>partir de bocetos.<br><br>Seleccione un plano de construcción y, a<br>continuación, cree líneas, arcos o puntos para crear<br>la geometría de boceto y construcción. Restrinja los<br>bocetos con cotas y restricciones. Seleccione<br>Terminar boceto para salir del modo de boceto.</div>

<!-- tooltip image -->
<svg class="a" style="left:130px;top:365px" width="305" height="189" font-family="Liberation Sans">
<rect width="305" height="189" fill="#fefefe"/>
<path d="M15.0 0V189M42.4 0V189M69.8 0V189M97.2 0V189M124.6 0V189M152.0 0V189M179.4 0V189M206.8 0V189M234.2 0V189M261.6 0V189M289.0 0V189M0 26.8H305M0 53.7H305M0 80.6H305M0 107.5H305M0 134.4H305M0 161.3H305M0 188.2H305" stroke="#ececec" stroke-width="1" fill="none"/>
<g transform="translate(-130 -365)">

<path d="M130 472.5H435" stroke="#f2a8a8" stroke-width="1"/>
<path d="M309.4 365V554" stroke="#9ad89a" stroke-width="1"/>
<!-- rect -->
<path d="M254.7 417.9H364.2V482.9A44 44 0 0 1 320.2 526.9H254.7Z" fill="#e4f0fa"/>
<path d="M320.2 526.9H254.7V417.9H364.2V482.9" fill="none" stroke="#2b2b2b" stroke-width="2"/>
<path d="M364.2 482.9A44 44 0 0 1 320.2 526.9" fill="none" stroke="#7cc6e6" stroke-width="1.7"/>
<path d="M256 419L364 527M363 419L256 526" stroke="#555" stroke-width="1.1" stroke-dasharray="5 3.5"/>
<circle cx="309.4" cy="472.6" r="6" fill="#ddd" stroke="#aaa" stroke-width="1"/>
<circle cx="309.4" cy="472.6" r="3.3" fill="#111"/>
<circle cx="319" cy="482.5" r="3" fill="#f4f4f4" stroke="#666" stroke-width="1"/>
<!-- dims -->
<path d="M254.7 399V415M364.2 399V415" stroke="#444" stroke-width="1"/>
<path d="M256 407.5H363" stroke="#222" stroke-width="1.2"/>
<path d="M255 407.5L262 405V410Z M364 407.5L357 405V410Z" fill="#222"/>
<text x="309" y="404" font-size="11" fill="#4a4a4a" text-anchor="middle">100.00</text>
<path d="M368 418H416M368 483H416" stroke="#444" stroke-width="1"/>
<path d="M411 419V482" stroke="#222" stroke-width="1.1"/>
<path d="M411 418.5L408.5 425H413.5Z M411 482.5L408.5 476H413.5Z" fill="#222"/>
<text transform="translate(404.5 445) rotate(-90)" font-size="10.5" fill="#666" text-anchor="middle">(60.00)</text>
<path d="M362 504L395 520.5H431" fill="none" stroke="#333" stroke-width="1.2"/>
<path d="M361 503.5L368.5 504.5L366 509.5Z" fill="#222"/>
<text x="394" y="517" font-size="11.5" fill="#4a4a4a">R40.00</text>
<!-- glyphs -->
<g fill="#bdbdbd" stroke="#888" stroke-width="0.8">
<rect x="269" y="414.5" width="14" height="5" rx="2"/>
<rect x="297" y="421" width="14" height="5" rx="2"/>
<rect x="249" y="482" width="14" height="5" rx="2"/>
</g>
<g stroke="#aaa" stroke-width="2.2" fill="none">
<path d="M316 432L326 422M319 435L329 425"/>
<path d="M359 457L369 447M362 460L372 450"/>
<path d="M250 481L260 471M253 484L263 474"/>
<path d="M293 541L303 531M296 544L306 534"/>
<path d="M201 470V485M205 470V485"/>
</g>
<rect x="199" y="463.5" width="8" height="23" rx="2" fill="none" stroke="#999" stroke-width="1"/>
<g stroke="#777" stroke-width="1.4" fill="none">
<path d="M297.5 479V491H306"/><path d="M352.5 531V544H361"/>
</g>
<g fill="#999"><circle cx="297.5" cy="478" r="2"/><circle cx="352.5" cy="530" r="2"/><rect x="304" y="489.5" width="4" height="3"/><rect x="359" y="542.5" width="4" height="3"/></g>
<path d="M358 420L364 426" stroke="#aaa" stroke-width="2"/>
<!-- left sketch -->
<path d="M144.5 389V418" stroke="#2fc22f" stroke-width="2" stroke-dasharray="4 2.5"/>
<path d="M144.5 418V472" stroke="#2fc22f" stroke-width="2.2"/>
<path d="M144.5 477V554" stroke="#9ad8e0" stroke-width="1" stroke-dasharray="2.5 1.5"/>
<path d="M150 472.4H228" stroke="#e02424" stroke-width="2.6" stroke-dasharray="14 3 4 3"/>
<path d="M145 395.4A77 77 0 0 1 221.5 468" fill="none" stroke="#8a8a8a" stroke-width="1.8"/>
<path d="M150 417.4H191" stroke="#e8b080" stroke-width="1.4" stroke-dasharray="5 3"/>
<path d="M198.7 425V522" stroke="#e8b080" stroke-width="1.2" stroke-dasharray="5 3"/>
<path d="M172 445L191 423M148 468L172 445" stroke="#b8b8b8" stroke-width="2"/>
<rect x="157.5" y="429.7" width="29.7" height="29.7" fill="#5a9ef0" opacity="0.9"/>
<path d="M146 418C160 424 172 432 172 445C172 456 158 465 146 471" fill="none" stroke="#7a8a99" stroke-width="1.3"/>
<path d="M144.5 413.5L148.5 417.4L144.5 421.3L140.5 417.4Z" fill="#1e5a1e"/>
<path d="M172 441L175.5 445L172 449L168.5 445Z" fill="#1e3f66"/>
<circle cx="198.7" cy="417.4" r="6.3" fill="#f0f0f0" stroke="#333" stroke-width="2"/>
<circle cx="198.7" cy="417.4" r="1.2" fill="#777"/>
<circle cx="144.5" cy="472.3" r="4.3" fill="#e2e2e2" stroke="#9a9a9a" stroke-width="1"/>
<circle cx="198.7" cy="526" r="3.3" fill="#fff" stroke="#777" stroke-width="1"/>
<path d="M144 476C136 486 133 503 143 522" fill="none" stroke="#8a8a8a" stroke-width="1.2"/>
<text transform="translate(161.5 477.5) rotate(90)" font-size="10" fill="#6a6a6a">-125</text>
<path d="M148 501V516M151 501V516" stroke="#8fd0e8" stroke-width="0.9"/><path d="M153 517L157 503M155.5 517L159.5 503" stroke="#8fd0e8" stroke-width="0.8" stroke-dasharray="1.5 1"/>
<rect x="139" y="520" width="11" height="11" fill="none" stroke="#8cc8e0" stroke-width="1" stroke-dasharray="1.5 1"/>
<path d="M139 525.5H150M144.5 520V531" stroke="#8cc8e0" stroke-width="1"/>
<path d="M146 531V543L149 540L151.5 545L153 544.3L150.8 539.5H155Z" fill="#fff" stroke="#222" stroke-width="1"/>
<path d="M157 549C155 546 160 545 159 542C158 540 161 538 162 540" fill="none" stroke="#1f3a6a" stroke-width="1.4"/>
<circle cx="211" cy="538" r="6.3" fill="#f6f6f6" stroke="#888" stroke-width="1.2"/>
<path d="M207.5 538.3L210 541L214.5 535.5" fill="none" stroke="#777" stroke-width="1.4"/>
</g>
</svg>

<div class="a tt" style="left:133px;top:579px">Pulse Ctrl+/ para obtener más ayuda.</div>
</body></html>
